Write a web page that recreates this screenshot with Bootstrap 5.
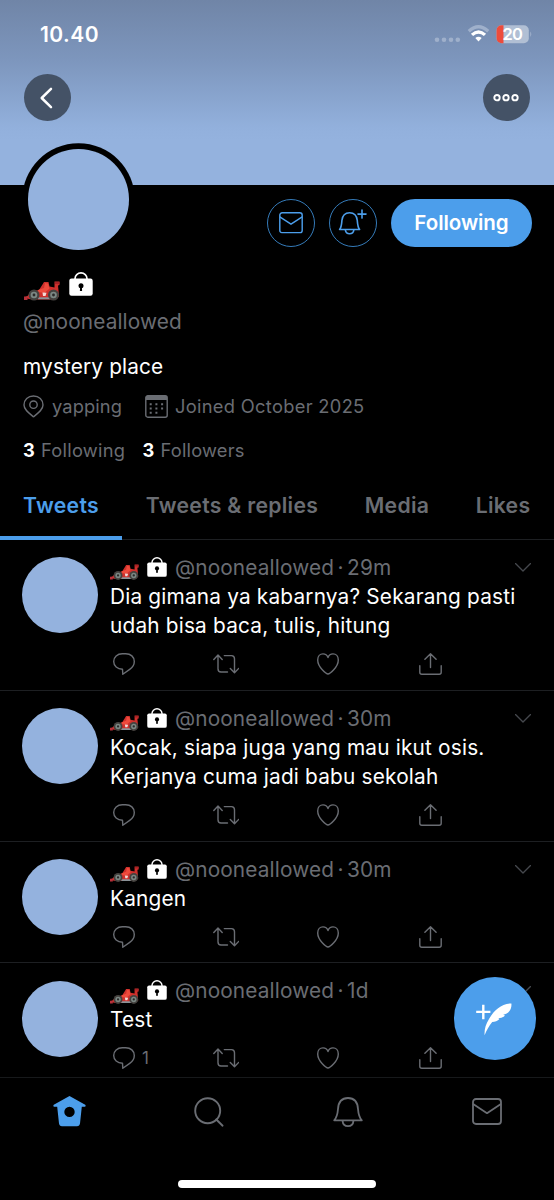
<!DOCTYPE html>
<html lang="id">
<head>
<meta charset="utf-8">
<meta name="viewport" content="width=device-width, initial-scale=1">
<title>@nooneallowed</title>
<link href="https://cdn.jsdelivr.net/npm/bootstrap@5.3.0/dist/css/bootstrap.min.css" rel="stylesheet">
<style>
:root{--sky:#94b2de;--accent:#4c9eeb;--dim:#6a6d73;--line:#1d1f22}
body{background:#000;color:#fff;font-family:Inter,"Liberation Sans",sans-serif;font-size:20px;overflow:hidden}
svg{display:block;flex:none;overflow:visible}
.ico{fill:none;stroke:currentColor;stroke-width:1.4;stroke-linejoin:round;stroke-linecap:round}
.screen{width:554px;height:1200px;overflow:hidden}
.banner{height:184.5px;background:linear-gradient(#7085a7 0,#7d96bd 60px,#92b0dc 127px,#94b2de 140px)}
.statusbar{height:68px;padding:0 24px 0 40px}
.clock{font-size:21px;font-weight:600;letter-spacing:.45px;line-height:1}
.round-dark{width:47.3px;height:47.3px;background:#445266;border-radius:50%}
.toolbar{padding:6px 24px 0 23.5px}
.face{width:76px;height:76px;border-radius:50%;background:var(--sky);flex:none}
.profile-face{width:100.6px;height:100.6px;box-shadow:0 0 0 5.7px #000;border-radius:50%;background:var(--sky);margin:-35.2px 0 0 5.7px}
.head-row{height:75px;padding:0 22px 0 22.5px}
.actions{padding-top:14.7px;gap:14px}
.ring{width:48px;height:48px;border:1.3px solid #357bb9;color:var(--accent);border-radius:50%}
.follow{width:141px;height:48px;border-radius:24px;background:var(--accent);color:#fff;font-weight:600;font-size:20.5px;letter-spacing:-.05px;padding:1px 0 0}
.follow:hover{background:var(--accent);color:#fff}
.info{padding:0 23px}
.dim{color:var(--dim)}
.handle{font-size:20.8px;line-height:28px;letter-spacing:.12px}
.bio{font-size:20.8px;line-height:28px;letter-spacing:.15px}
.meta,.counts{font-size:18.3px;line-height:26px;letter-spacing:.1px}
.joined{letter-spacing:.31px}
.num{display:inline-block;width:18px}
.tabbar{height:65px;border-bottom:1px solid var(--line)}
.tabbar .nav-link{padding:0;color:var(--dim);font-weight:600;font-size:21.2px;letter-spacing:.28px;line-height:30px;white-space:nowrap;height:65px;padding-top:14.5px;text-align:center}
.tabbar .nav-link.active{color:var(--accent);border-bottom:4px solid var(--accent)}
.tweet{padding:17.4px 22px 0;border-bottom:1px solid var(--line)}
.tweet-body{margin-top:-4.6px;margin-left:12px}
.tweet-head,.tweet-text{line-height:29.33px;font-size:20.8px}
.tweet-head{letter-spacing:.14px}
.tweet-text{margin:0;white-space:nowrap;letter-spacing:.19px}
.mid{width:13px;text-align:center}
.acts{height:49.1px;padding-bottom:2px}
.act{width:102px;padding-left:3px;color:var(--dim)}
.bottom{height:123.5px;background:#000;border-top:1.5px solid #17191b;position:absolute;left:0;right:0;bottom:0}
.bottom .nav{width:556px}
.bottom .nav-item{height:68px;color:var(--dim)}
.home-bar{width:198px;height:8px;border-radius:4px;background:#fff;margin:34px auto 0}
.fab{position:absolute;left:453.5px;top:977px;width:82.6px;height:82.6px;border-radius:50%;background:var(--accent)}
</style>
</head>
<body>
<svg width="0" height="0" class="position-absolute">
<defs>
<symbol id="car" viewBox="0 0 36 20">
  <path d="M0 16.500l3.500-1.500L7 10.500l8-1.500 3.500-5.500L20 1h4.500l1 4.500 5 1V.500H35.500v3.500l-1.500.5.500 5 .5 6-5 3H10L5 18z" fill="#cf302c"/>
  <path d="M14 9l6-2 1-5 3 .5 1.500 5-5 4.500-6-1z" fill="#ee4a3c"/><path d="M31 1h4.500v2H31z" fill="#a82226"/>
  <path d="M18.500 11.500l4 .3-1 3.200h-2.500z" fill="#f3d9d6"/><path d="M14 16.300h12v2H14z" fill="#8a9298"/><path d="M0 15.500h3.500v3.500H0z" fill="#b5303a"/>
  <circle cx="10" cy="14" r="5.500" fill="#45423f"/><circle cx="10" cy="14" r="3.300" fill="#7b8783"/><circle cx="10" cy="14" r="1.400" fill="#2a2a2a"/>
  <circle cx="29.500" cy="14" r="5.500" fill="#45423f"/><circle cx="29.500" cy="14" r="3.300" fill="#7b8783"/><circle cx="29.500" cy="14" r="1.400" fill="#2a2a2a"/>
</symbol>
<symbol id="lock" viewBox="0 0 24 24">
  <path d="M6 7.500V6.700a6 5.800 0 0 1 12 0v.8" fill="none" stroke="#fff" stroke-width="1.700"/>
  <rect x=".3" y="6.500" width="23.400" height="17.200" rx="2.200" fill="#fff"/>
  <circle cx="12" cy="13.700" r="2.500"/><path d="M11.200 14h1.600l.3 5h-2.200z"/>
</symbol>
<symbol id="reply" viewBox="0 0 22 22"><path d="M9.500 16.200C4.300 16.200.7 13 .7 8.500S4.300.7 9.300.7h3.400c5 0 8.600 3.200 8.600 7.800 0 3.400-1.700 5.900-4.600 7.900L9.800 21.300z"/></symbol>
<symbol id="retweet" viewBox="0 0 26 20"><path d="M.8 5.400L5 1l4.200 4.400M5 1.200v13.600c0 2 .9 3.200 3 3.200h6.500M11.300 1.600h7.200c2 0 3 1.200 3 3.200v13.400M17.300 14.400l4.200 4.300 4.200-4.300"/></symbol>
<symbol id="heart" viewBox="0 0 22 22"><path d="M11 21C9.500 21 .7 14.300.7 7 .7 3.200 3.100.9 6 .9c2.700 0 4.300 1.700 5 3.600.7-1.900 2.300-3.600 5-3.600 2.900 0 5.300 2.300 5.300 6.100C21.300 14.300 12.500 21 11 21z"/></symbol>
<symbol id="share" viewBox="0 0 23 22"><path d="M11.500 14.500V1M5.900 6.300L11.500.8l5.600 5.500M.8 12.700v6.600c0 1.300.7 2 2 2h17.400c1.300 0 2-.7 2-2v-6.600"/></symbol>
<symbol id="down" viewBox="0 0 16 9"><path d="M.5.5L8 8 15.500.5"/></symbol>
<symbol id="mail" viewBox="0 0 30 27"><rect x="1" y="1" width="28" height="25" rx="3"/><path d="M1.500 6.300L15 15.200l13.500-8.900"/></symbol>
<symbol id="bell" viewBox="0 0 30 30"><path d="M1.200 23.300C4 20.300 4.600 17 5 12 5.400 5 9.200 1 15 1s9.600 4 10 11c.4 5 1 8.300 3.800 11.300zM9.500 23.600c.3 3.400 2.300 5.500 5.500 5.500s5.200-2.100 5.500-5.500"/></symbol>
</defs>
</svg>

<div class="screen position-relative">
  <header class="banner">
    <div class="statusbar d-flex align-items-center justify-content-between">
      <span class="clock">10.40</span>
      <svg width="99" height="20" viewBox="0 0 99 20">
        <g fill="#9fb0cb"><circle cx="6" cy="15.700" r="2.300"/><circle cx="13" cy="15.700" r="2.300"/><circle cx="20" cy="15.700" r="2.300"/><circle cx="26.800" cy="15.700" r="2.300"/></g>
        <g fill="none" stroke-width="3.300"><path d="M37.800 7.200Q47.500-1.600 57.200 7.200" stroke="#9fb0cb"/><path d="M41 10.900Q47.500 4.900 54 10.900" stroke="#fff"/></g>
        <path d="M44.300 14q3.200-2.500 6.400 0L47.500 17.600z" fill="#fff"/>
        <rect x="65.500" y="1.200" width="32.300" height="18" rx="5" fill="#b1bfd4"/>
        <path d="M72.500 1.200h-2a5 5 0 0 0-5 5v8a5 5 0 0 0 5 5h2z" fill="#ed4c3c"/>
        <path d="M99.200 7.500q2.200 2.700 0 5.400z" fill="#9fb0cb"/>
        <text x="71.500" y="16" font-size="16.500" font-weight="600" fill="#fff" textLength="20.500">20</text>
      </svg>
    </div>
    <div class="toolbar d-flex justify-content-between">
      <div class="round-dark d-flex align-items-center justify-content-center"><svg width="12" height="20" viewBox="0 0 12 20" class="ico" style="stroke-width:2.500"><path d="M10 .8L.7 10 10 19.200"/></svg></div>
      <div class="round-dark d-flex align-items-center justify-content-center"><svg width="26" height="8" viewBox="0 0 26 8" class="ico" style="stroke-width:1.900"><circle cx="4" cy="3.700" r="2.700"/><circle cx="13" cy="3.700" r="2.700"/><circle cx="22" cy="3.700" r="2.700"/></svg></div>
    </div>
  </header>

  <section class="head-row d-flex align-items-start">
    <div class="profile-face me-auto"></div>
    <div class="actions d-flex">
      <div class="ring d-flex align-items-center justify-content-center"><svg class="ico" width="24" height="21.600" style="stroke-width:1.800"><use href="#mail"/></svg></div>
      <div class="ring d-flex align-items-center justify-content-center"><svg class="ico" width="28" height="26" viewBox="0 0 28 26"><path d="M.6 19.500c2-2.500 2-5.300 2.300-9 .5-5 3.200-7.800 7.700-7.800s7.200 2.800 7.700 7.800c.3 3.700.3 6.500 2.300 9zM6.300 19.800c.4 2.400 2 3.900 4.300 3.900s3.900-1.500 4.300-3.900M23 .1v8M19 4.100h8" stroke-width="1.600"/></svg></div>
      <button class="btn follow border-0">Following</button>
    </div>
  </section>

  <section class="info">
    <div class="d-flex" style="padding-top:12.500px;height:48.500px">
      <svg width="36" height="20" style="margin-top:9px;margin-left:1px"><use href="#car"/></svg>
      <svg width="24" height="24" style="margin-left:9px"><use href="#lock"/></svg>
    </div>
    <div class="handle dim">@nooneallowed</div>
    <div class="bio" style="margin-top:17px">mystery place</div>
    <div class="meta dim d-flex align-items-center" style="margin-top:12px">
      <svg class="ico" width="21" height="23" viewBox="0 0 21 23"><path d="M10.500 21.800C5.500 17.800 1 14.500 1 10 1 4.700 5 1 10.500 1S20 4.700 20 10c0 4.500-4.500 7.800-9.500 11.800z"/><circle cx="10.500" cy="9.700" r="3.700"/></svg>
      <span style="margin-left:8px;width:70px">yapping</span>
      <svg width="23" height="23" viewBox="0 0 23 23" style="margin-left:23px"><rect x=".8" y=".8" width="21.400" height="21.400" rx="2" fill="none" stroke="currentColor" stroke-width="1.400"/><path d="M1 1h21v4H1z" fill="currentColor"/><path d="M4.700 9.200h14M4.700 13.400h14M4.700 17.700h8" stroke="currentColor" stroke-width="2" stroke-dasharray="2 3.700" fill="none"/></svg>
      <span class="joined" style="margin-left:7px">Joined October 2025</span>
    </div>
    <div class="counts dim d-flex" style="margin-top:18px"><div style="width:119.500px"><b class="num text-white">3</b><span style="letter-spacing:.25px">Following</span></div><div><b class="num text-white">3</b><span style="letter-spacing:.2px">Followers</span></div></div>
  </section>

  <nav class="tabbar nav flex-nowrap" style="margin-top:12px">
    <a class="nav-link active" style="width:122px">Tweets</a>
    <a class="nav-link" style="width:220px">Tweets &amp; replies</a>
    <a class="nav-link" style="width:110px">Media</a>
    <a class="nav-link" style="width:102px">Likes</a>
  </nav>

  <main id="feed"></main>

  <div class="fab"><svg width="82.600" height="82.600" viewBox="0 0 82.600 82.600"><path d="M29.300 27.700v14.500M22.200 34.900h14.200" stroke="#fff" stroke-width="2.400"/><path d="M30.600 58.300C30.200 53 31.500 47.500 35 42c5-8.500 12-15.200 22.400-15.500.3 3-.5 5.500-1.900 7.500-1.600 2.100-3.800 3.100-6.300 3.700l1.800.7c-1.700 2-4.500 2.700-6.700 2.900l1.200.8c-1.800 1.900-4.600 2.800-7.300 3-3.200 3.900-5.500 8.200-7.600 13.200z" fill="#fff"/></svg></div>

  <footer class="bottom">
    <div class="nav nav-justified">
      <div class="nav-item d-flex align-items-center justify-content-center"><svg width="33" height="31" viewBox="0 .2 33 31" fill="#4c9eeb"><path fill-rule="evenodd" d="M16.500.3l15.700 8.600c.7.400.5 2-.3 2h-3.100L27 27.800c-.2 1.600-1.300 2.700-3 2.700H9c-1.700 0-2.800-1.100-3-2.700L4.200 10.900H1.100c-.8 0-1-1.600-.3-2zM16.500 10.900a5.200 5.200 0 1 0 0 10.400 5.200 5.200 0 0 0 0-10.400z"/></svg></div>
      <div class="nav-item d-flex align-items-center justify-content-center"><svg class="ico" width="30" height="30" viewBox="0 0 30 30" style="stroke-width:1.900"><circle cx="13.700" cy="13.700" r="12.500"/><path d="M22.300 22.500l6.300 6.200"/></svg></div>
      <div class="nav-item d-flex align-items-center justify-content-center"><svg class="ico" width="30" height="30" style="stroke-width:1.800"><use href="#bell"/></svg></div>
      <div class="nav-item d-flex align-items-center justify-content-center"><svg class="ico" width="30" height="27" style="stroke-width:1.800"><use href="#mail"/></svg></div>
    </div>
    <div class="home-bar"></div>
  </footer>
</div>

<script>
const tweets = [
  {age:'29m', lines:['Dia gimana ya kabarnya? Sekarang pasti','udah bisa baca, tulis, hitung']},
  {age:'30m', lines:['Kocak, siapa juga yang mau ikut osis.','Kerjanya cuma jadi babu sekolah']},
  {age:'30m', lines:['Kangen']},
  {age:'1d', lines:['Test'], replies:1}
];
const icon = (id,w,h) => `<svg class="ico" width="${w}" height="${h}"><use href="#${id}"/></svg>`;
document.getElementById('feed').innerHTML = tweets.map(t => `
  <article class="tweet d-flex">
    <div class="face"></div>
    <div class="tweet-body flex-grow-1">
      <div class="tweet-head dim d-flex align-items-center">
        <svg width="29" height="16.500" style="margin:10px 8px 0 0"><use href="#car"/></svg>
        <svg width="20" height="20" style="margin:-1px 8px 0 0"><use href="#lock"/></svg>
        <span>@nooneallowed</span><span class="mid">·</span><span>${t.age}</span>
        <span class="ms-auto" style="margin-right:1px;color:#45484d">${icon('down',16,9)}</span>
      </div>
      ${t.lines.map(l => `<p class="tweet-text">${l}</p>`).join('')}
      <div class="acts d-flex align-items-center">
        <div class="act d-flex align-items-center">${icon('reply',22,22)}${t.replies ? `<span style="font-size:17px;margin-left:7px">${t.replies}</span>` : ''}</div>
        <div class="act d-flex align-items-center" style="padding-left:1px">${icon('retweet',26,20)}</div>
        <div class="act d-flex align-items-center">${icon('heart',22,22)}</div>
        <div class="act d-flex align-items-center">${icon('share',23,22)}</div>
      </div>
    </div>
  </article>`).join('');
</script>
<script src="https://cdn.jsdelivr.net/npm/bootstrap@5.3.0/dist/js/bootstrap.bundle.min.js"></script>
</body>
</html>
